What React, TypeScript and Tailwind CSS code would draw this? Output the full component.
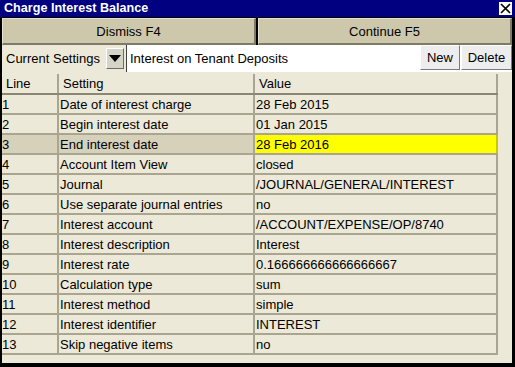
const rows: [string, string, string][] = [
  ['1', 'Date of interest charge', '28 Feb 2015'],
  ['2', 'Begin interest date', '01 Jan 2015'],
  ['3', 'End interest date', '28 Feb 2016'],
  ['4', 'Account Item View', 'closed'],
  ['5', 'Journal', '/JOURNAL/GENERAL/INTEREST'],
  ['6', 'Use separate journal entries', 'no'],
  ['7', 'Interest account', '/ACCOUNT/EXPENSE/OP/8740'],
  ['8', 'Interest description', 'Interest'],
  ['9', 'Interest rate', '0.166666666666666667'],
  ['10', 'Calculation type', 'sum'],
  ['11', 'Interest method', 'simple'],
  ['12', 'Interest identifier', 'INTEREST'],
  ['13', 'Skip negative items', 'no'],
];

const selected = '3';

export default function App() {
  return (
    <div className="flex h-[367px] w-[515px] flex-col bg-black font-['Liberation_Sans',Arial,sans-serif] text-[13px] leading-none text-black">
      {/* title bar */}
      <div className="flex h-[17px] items-center justify-between bg-[#000080] pl-[4px] pr-[3px]">
        <span className="text-[12.6px] font-bold text-white">Charge Interest Balance</span>
        <span className="flex h-[13px] w-[13px] items-center justify-center bg-white">
          <svg width="11" height="11" viewBox="0 0 11 11">
            <path d="M1 1 L10 10 M10 1 L1 10" stroke="#000" strokeWidth="1.6" />
          </svg>
        </span>
      </div>

      <div className="mb-[4px] ml-[2px] mr-[3px] mt-[1px] flex flex-1 flex-col bg-[#ece9d8]">
        {/* action buttons */}
        <div className="flex h-[27px] gap-[2px] bg-black">
          <button className="flex-1 border-b-2 border-r-2 border-t border-l border-b-[#7d7a68] border-r-[#7d7a68] border-t-[#e4e0cc] border-l-[#e4e0cc] bg-[#cdc8ac]">
            Dismiss F4
          </button>
          <button className="flex-1 border-b-2 border-r-2 border-t border-l border-b-[#7d7a68] border-r-[#7d7a68] border-t-[#e4e0cc] border-l-[#e4e0cc] bg-[#cdc8ac]">
            Continue F5
          </button>
        </div>

        {/* settings selector */}
        <div className="flex h-[27px] items-stretch">
          <span className="flex w-[104px] items-center pl-[4px]">Current Settings</span>
          <span className="my-[3px] flex w-[18px] items-center justify-center border border-b-[#6b6b6b] border-r-[#6b6b6b] border-t-white border-l-white bg-[#d6d3c7]">
            <svg width="12" height="7" viewBox="0 0 12 7">
              <path d="M0 0 H12 L6 7 Z" fill="#000" />
            </svg>
          </span>
          <span className="ml-[2px] flex flex-1 items-center border-l border-l-[#404040] bg-white pl-[3px]">
            Interest on Tenant Deposits
          </span>
          <div className="flex gap-[1px] bg-white pb-[2px]">
            <button className="w-[40px] border border-b-[#7a7a7a] border-r-[#7a7a7a] border-t-white border-l-white bg-[#ededed]">New</button>
            <button className="w-[51px] border border-b-[#7a7a7a] border-r-[#7a7a7a] border-t-white border-l-white bg-[#ededed]">Delete</button>
          </div>
        </div>

        {/* table */}
        <div className="mt-[2px] flex">
          <div className="w-[496px]">
            <div className="flex h-[21px] border-b-2 border-[#8a8775]">
              <div className="flex w-[57px] items-center border-r-2 border-[#a9a591] pl-[4px]">Line</div>
              <div className="flex w-[196px] items-center border-r-2 border-[#a9a591] pl-[4px]">Setting</div>
              <div className="flex flex-1 items-center border-r-2 border-[#a9a591] pl-[4px]">Value</div>
            </div>
            {rows.map(([line, setting, value]) => {
              const isSel = line === selected;
              return (
                <div
                  key={line}
                  className={`flex h-[20px] border-b-2 border-[#a9a591] ${isSel ? 'bg-[#d6d1bb]' : ''}`}
                >
                  <div className="flex w-[57px] items-center border-r-2 border-[#a9a591]">{line}</div>
                  <div className="flex w-[196px] items-center border-r-2 border-[#a9a591] pl-[1px]">{setting}</div>
                  <div
                    className={`flex flex-1 items-center border-r-2 pl-[1px] ${
                      isSel ? 'border-[#c8c800] bg-[#ffff00]' : 'border-[#a9a591] bg-[#ece9d8]'
                    }`}
                  >
                    {value}
                  </div>
                </div>
              );
            })}
          </div>
        </div>
      </div>
    </div>
  );
}
